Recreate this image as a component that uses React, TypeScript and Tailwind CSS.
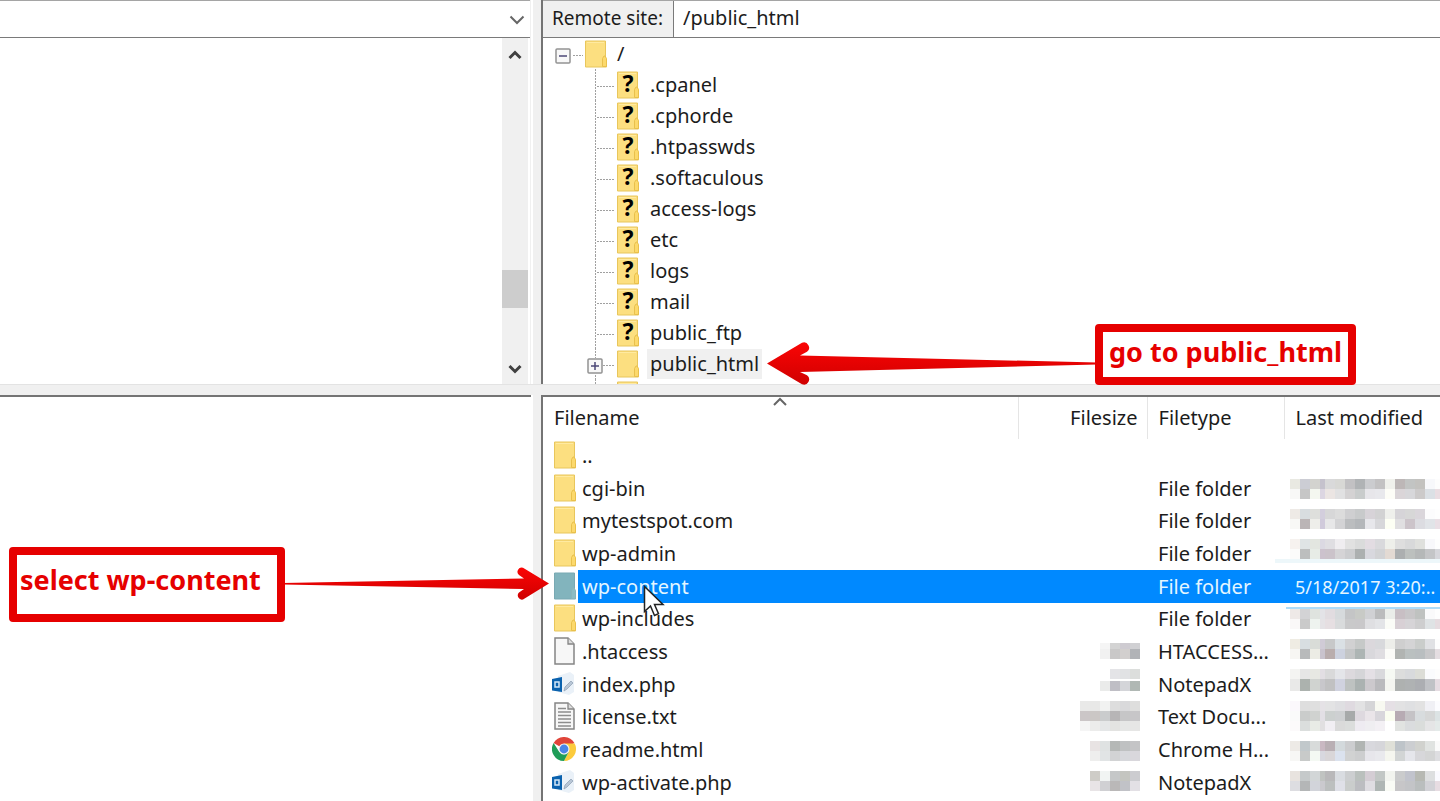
import { ReactNode } from "react";

type IconKind = "folder" | "selected" | "file" | "text" | "php" | "chrome";

const tree = [
  { name: ".cpanel", unknown: true },
  { name: ".cphorde", unknown: true },
  { name: ".htpasswds", unknown: true },
  { name: ".softaculous", unknown: true },
  { name: "access-logs", unknown: true },
  { name: "etc", unknown: true },
  { name: "logs", unknown: true },
  { name: "mail", unknown: true },
  { name: "public_ftp", unknown: true },
  { name: "public_html", unknown: false },
];

const files: { name: string; icon: IconKind; type: string; modified?: string }[] = [
  { name: "..", icon: "folder", type: "" },
  { name: "cgi-bin", icon: "folder", type: "File folder" },
  { name: "mytestspot.com", icon: "folder", type: "File folder" },
  { name: "wp-admin", icon: "folder", type: "File folder" },
  { name: "wp-content", icon: "selected", type: "File folder", modified: "5/18/2017 3:20:.." },
  { name: "wp-includes", icon: "folder", type: "File folder" },
  { name: ".htaccess", icon: "file", type: "HTACCESS..." },
  { name: "index.php", icon: "php", type: "NotepadX" },
  { name: "license.txt", icon: "text", type: "Text Docu..." },
  { name: "readme.html", icon: "chrome", type: "Chrome H..." },
  { name: "wp-activate.php", icon: "php", type: "NotepadX" },
];

// Left edge of every block in the censored date column
const dateX = [210, 220, 230, 240, 245, 255, 265, 275, 285, 295, 305, 315, 325, 335, 345, 355, 360];

const dates: { y: number; h: number; c: string }[] = [
  { y: 9, h: 10, c: "e9e9e2 cccdd4 d3d3cf c5c2cd d9d9da d8d8d5 c2c1c3 b0b3b5 cbcccf c3c2c3 f0f1ec bdb7b7 c2c4c3 c3c2bf f7f8fb fdfdfd" },
  { y: 19, h: 10, c: "f8f8f7 c6c6c6 f4f7f0 dcd6e2 ebe5e3 e1e1e2 d4d2d3 c9cccc e7e6ea e8e8ec fdfdf7 dad5d8 d7d7da cccaca dbe0e5 eadde2" },
  { y: 39, h: 10, c: "eeeae6 d8dde0 dedfdc d3cedd d7d7d8 dcdcdc cfcfd1 c8cacb d7d3d8 d2d2d3 eff0ec d6d4d8 d7d7d7 dad6db fcfcfd fefefe" },
  { y: 49, h: 10, c: "f8f8f6 bbb5b6 eeeeea d0cadb e7e7e8 d3d3d5 bbbdbf b4b7ba e7e7eb d7d7da fdfff4 e0dfe1 ccc4ca dcdce1 e1e4e8 eadfe5" },
  { y: 69, h: 10, c: "f6f2ef dfe4e5 e3e6e0 dbd9e2 dfdee2 efedf0 e1e1e1 dadbdb e2dce2 d9d9dc eeefea dedede d8d9da dfe0dd f8f8fb fefefe" },
  { y: 79, h: 10, c: "fbfbfa bcbebe e7ece6 ccc2cd cbc3ca d5d4d6 cccdcf acb0b0 d8d8de d2d3d5 e3dad3 acafb0 bcc0be b5b8b8 c4c5c7 d6d6db" },
  { y: 139, h: 10, c: "eee9e7 d3d3d5 dfe3df e3e3e7 e1dce0 d6dadc c4c5c6 c8cac6 d0d1d4 bbbcbd eaede9 c8bfc4 c8c6c8 bfc2c0 fafafb fefefe" },
  { y: 149, h: 10, c: "faf8f8 cacaca eef3ef e5e3e6 e6dfe2 d9dbdc c9c9ca c9c8ca dfdfe2 e3e4e7 fbfcf7 d8d0d5 d6d4d7 cececf dfe3e5 e6dce0" },
  { y: 169, h: 10, c: "efece3 d8dee1 d9dcd8 d0cbd6 c7c8c9 dae0e4 d1d1d2 c6c9c8 dbd8dc d8d9dc edeeea cfcfcf d4d4d5 cacdcb e0e1e4 fdfdfd" },
  { y: 179, h: 10, c: "f7f6f3 b8babb ecece5 c9c3cd b9adad cdd2df c4c6c7 adb5b4 d9d8dc dfdde1 fbfbf8 b1b4b2 bac0c0 b9bec0 c7c7c9 e4dde1" },
  { y: 199, h: 10, c: "f4f4f2 e6e6e6 e7e8e3 e2dee3 d9d9da e4e5e9 dcd9dd d5d5d8 e4e0e5 d9d9dc f6f9f3 dcdddc d8dadc dcddd7 fafbfd fdfdfd" },
  { y: 209, h: 12, c: "e9e9e8 acb2ae d0d3d0 c8c7cb c1c1c2 d0d2df bec2c1 abb2b1 ccc9cd bababd f4f5f0 aeb1b0 afb2b3 acaeb2 c0c2c6 e6dce2" },
  { y: 231, h: 10, c: "fbf8fc dedede dfdfdf e5e2e6 e3e3e4 dfdfe2 dfdae0 e2e2e3 d5d5d7 f8f9f1 e5e0e5 e2e2e3 dfe0e2 e2e2e2 f0f0f5 fcfcff" },
  { y: 241, h: 10, c: "fafafa cacccb d0d2d0 e2dfe5 ccd0cf ced0d2 a7aaaa ded9df eae5e9 d8d6db fafdf0 b7abb3 c5c3c6 d8dcde d6d7d7 dce3e4" },
  { y: 251, h: 10, c: "fcfafb dbdedd e8ebe6 e1dfe1 f1eef3 dadada dbdddc eeebf1 efeef1 f3f0f4 ffffff e1e3e1 dadcde dadddb e5e5e6 e4eae9" },
  { y: 271, h: 10, c: "edeae6 c1c8cb d8dbda c9b8c2 b9afb4 d3d9dc cccdcf b1b5b3 d8d8dd d6d6da dfe0d8 bec4c9 ccced1 d1d2ce e0e3e1 fafafa" },
  { y: 281, h: 10, c: "f7f7f5 c8cac9 f4f9f3 d8d8df d9d6d8 dbe2ee d1d2d2 cdcecf e7e6eb e9e9ed f5f6ef d2d5d5 e5e6eb d7d7da d4d5d5 dedee1" },
  { y: 301, h: 10, c: "e8e3df c5c9ca d2d6d7 c0c3c1 b9b8ba d9dce1 ccced0 bac0bd d4cdd4 c2c7c5 f2f4ef cacbcc c1c3cc b7b9b3 dddfe0 fafaff" },
  { y: 311, h: 10, c: "dddde1 b4b6b7 d2d4da cac9ce bcbfbf dfe0e8 cacdcc bcbdc1 dfdde2 afb6b4 f9fbf5 c7c6c8 c3c4c7 babebe d2d2d7 e7dce2" },
];

const sizes: { x: number; y: number; h: number; c: string }[] = [
  { x: 20, y: 173, h: 6, c: "f5f5f5 d3d3d3 cecbd1 d0d0d3" },
  { x: 20, y: 179, h: 10, c: "f1f1f1 c9c8c8 d2cfce b1b3b7" },
  { x: 30, y: 199, h: 10, c: "e4e4e7 e1e2e4 dcdedc" },
  { x: 20, y: 211, h: 10, c: "eaebea bfbec5 d4d5d9 b0b8b4" },
  { x: 0, y: 231, h: 10, c: "e9e9e8 e8e8e7 f1f2f1 dddddd d9d9db dededd" },
  { x: 0, y: 241, h: 10, c: "cbc6c7 cbc7c5 cacccd b7b5b6 c6c6c7 c7c6c8" },
  { x: 0, y: 251, h: 10, c: "f5f5f5 ececeb e5e7e8 e3e3e1 e6e7e6 e6e6e5" },
  { x: 10, y: 271, h: 10, c: "e8e3e3 dfe2e2 b5b8b6 bfc1c2 c4c4c6" },
  { x: 10, y: 281, h: 10, c: "eeeeed e1e4e5 d2d3d4 d7d8dc d9d7dc" },
  { x: 10, y: 301, h: 10, c: "ceccc7 f1f4f3 c5c7c8 c4c5c0 ccccd0" },
  { x: 10, y: 311, h: 10, c: "e8e4e6 d0d0d3 bab8b8 c1c2c7 e3e0e5" },
];

function Censored() {
  return (
    <svg className="pointer-events-none absolute right-0 top-[73px]" width="360" height="331" shapeRendering="crispEdges" aria-hidden="true">
      <rect x="195" y="89" width="165" height="4" fill="#edf7fa" />
      <rect x="206" y="137" width="154" height="2" fill="#aedcf8" />
      {dates.map((row) =>
        row.c.split(" ").map((c, i) => (
          <rect key={`${row.y}-${i}`} x={dateX[i]} y={row.y} width={dateX[i + 1] - dateX[i]} height={row.h} fill={`#${c}`} />
        )),
      )}
      {sizes.map((row) =>
        row.c.split(" ").map((c, i) => (
          <rect key={`${row.y}-${i}`} x={row.x + i * 10} y={row.y} width="10" height={row.h} fill={`#${c}`} />
        )),
      )}
    </svg>
  );
}

function Folder({ selected = false }: { selected?: boolean }) {
  const edge = selected ? "#79a9b3" : "#e8c65c";
  const fill = selected ? "#82b4bd" : "#fcdf80";
  return (
    <svg width="22" height="28" viewBox="0 0 22 28" className="shrink-0" aria-hidden="true">
      <path d="M.5 1h20v17l1 2v7H.5Z" fill={fill} stroke={edge} />
      {!selected && <path d="M2 2.500h17" stroke="#ffeaa0" />}
      <path d="M17.500 26.500v-8l1.500-2.500h1l1.500 2.500v8Z" fill={selected ? "#8dbcc3" : "#fcd96c"} stroke={selected ? "#8ab4ba" : "#e9c04c"} />
    </svg>
  );
}

function Page({ lines = false }: { lines?: boolean }) {
  return (
    <svg width="22" height="28" viewBox="0 0 22 28" className="shrink-0" aria-hidden="true">
      <path d="M1 1h13l6 6v20H1Z" fill="#f7f7f7" stroke="#858585" strokeWidth="1.500" />
      <path d="M14 1v6h6" fill="#ddd" stroke="#858585" strokeWidth="1.300" />
      {lines && <path d="M4 6.500h8M4 10h13M4 13.500h13M4 17h13M4 20.500h13M4 24h13" stroke="#8d8d8d" strokeWidth="1.500" />}
    </svg>
  );
}

function Php() {
  return (
    <svg width="24" height="26" viewBox="0 0 24 26" className="shrink-0" aria-hidden="true">
      <path d="M6 5 18 1l4 3v17l-5 3-11-3Z" fill="#eaf1f8" />
      <path d="M0 8l10-2v15L0 19.500Z" fill="#0b62ae" />
      <path d="M3 11h4v5H3Z" fill="#0b62ae" stroke="#d5e8f8" strokeWidth="1.500" />
      <path d="M12 20l1-4 6-6 2 2-6 6Z" fill="#b8c6d6" stroke="#94a5b8" strokeWidth=".8" />
    </svg>
  );
}

function Chrome() {
  return (
    <svg width="24" height="24" viewBox="0 0 24 24" className="shrink-0" aria-hidden="true">
      <path d="M12 12 1.600 6A12 12 0 0 1 22.400 6Z" fill="#e0453a" />
      <path d="M12 6.500h10.700A12 12 0 0 1 12 24l4.800-9.300Z" fill="#fccb3c" />
      <path d="M1.600 6 7.200 14.700 12 17.500l4.800-2.800L12 24A12 12 0 0 1 1.600 6Z" fill="#1f9d58" />
      <circle cx="12" cy="12" r="5.500" fill="#f4f4f4" />
      <circle cx="12" cy="12" r="4.400" fill="#4a85e8" />
    </svg>
  );
}

function FileIcon({ kind }: { kind: IconKind }) {
  if (kind === "php") return <Php />;
  if (kind === "chrome") return <Chrome />;
  if (kind === "file" || kind === "text") return <Page lines={kind === "text"} />;
  return <Folder selected={kind === "selected"} />;
}

function Chevron({ d, thick = false }: { d: string; thick?: boolean }) {
  return (
    <svg width="16" height="10" viewBox="0 0 16 10" fill="none" stroke={thick ? "#404040" : "#666"} strokeWidth={thick ? 3 : 2} aria-hidden="true">
      <path d={d} />
    </svg>
  );
}

function Toggle({ open }: { open: boolean }) {
  return (
    <button type="button" aria-label={open ? "Collapse" : "Expand"} className="block size-4">
      <svg width="16" height="16" viewBox="0 0 16 16" aria-hidden="true">
        <rect x="1" y="1" width="14" height="14" rx="1" fill="#f8f8f8" stroke="#929292" strokeWidth="1.500" />
        <path d={open ? "M4 8h8" : "M4 8h8M8 4v8"} stroke="#4c4877" strokeWidth="1.500" />
      </svg>
    </button>
  );
}

function Branch({ children }: { children?: ReactNode }) {
  return (
    <div className="relative h-full w-[32px] shrink-0">
      <svg className="absolute inset-0" width="32" height="31" stroke="#777" strokeDasharray="2 1" strokeOpacity=".7" aria-hidden="true">
        <path d="M10.500 0v31M12 17.500h17" />
      </svg>
      {children && <div className="absolute left-[2px] top-[10px] bg-white">{children}</div>}
    </div>
  );
}

function LocalPane() {
  return (
    <div className="flex min-w-0 flex-col border-r border-[#f0f0f0] bg-white">
      <div className="relative h-[38px] shrink-0 border-y border-t-[#a5a5a5] border-b-[#7a7a7a]">
        <select aria-label="Local site" className="h-full w-full appearance-none bg-white px-2 outline-none" />
        <div className="pointer-events-none absolute right-[5px] top-[14px]">
          <Chevron d="M1.500 1.500 8 8l6.500-6.500" />
        </div>
      </div>
      <div className="flex min-h-0 flex-1 justify-end">
        <div className="mr-[2px] flex w-[26px] flex-col items-center bg-[#f0f0f0]">
          <button type="button" aria-label="Scroll up" className="flex h-[34px] w-full items-center justify-center">
            <Chevron thick d="M2.500 8 8 2.500 13.500 8" />
          </button>
          <div className="flex-[197]" />
          <div className="h-[38px] w-full bg-[#cdcdcd]" />
          <div className="flex-[46]" />
          <button type="button" aria-label="Scroll down" className="flex h-[30px] w-full items-center justify-center">
            <Chevron thick d="M2.500 2 8 7.500 13.500 2" />
          </button>
        </div>
      </div>
    </div>
  );
}

function RemoteTree() {
  return (
    <div className="flex min-w-0 flex-col overflow-hidden border-l-2 border-[#747474] bg-white">
      <div className="flex h-[38px] shrink-0 border-y border-t-[#a5a5a5] border-b-[#7a7a7a]">
        <label htmlFor="remote" className="flex w-[131px] shrink-0 items-center border-r border-[#7a7a7a] bg-[#f0f0f0] pb-0.5 pl-[9px] text-[19px]">
          Remote site:
        </label>
        <input id="remote" defaultValue="/public_html" className="min-w-0 flex-1 bg-white px-[9px] pb-0.5 outline-none" />
      </div>
      <div className="flex h-[31px] shrink-0 items-center pl-3">
        <div className="flex items-center pt-1">
          <Toggle open />
          <svg width="14" height="2" stroke="#777" strokeDasharray="2 1" strokeOpacity=".7" aria-hidden="true">
            <path d="M2 .5h10" />
          </svg>
        </div>
        <Folder />
        <span className="pl-[10px]">/</span>
      </div>
      <ul className="pl-[42px]">
        {tree.map((node) => (
          <li key={node.name} className="flex h-[31px] items-center">
            <Branch>{node.unknown ? null : <Toggle open={false} />}</Branch>
            <span className="relative flex shrink-0">
              <Folder />
              {node.unknown && (
                <span className="absolute inset-0 flex items-center justify-center pb-0.5 text-[23px] font-bold leading-none text-black">?</span>
              )}
            </span>
            <button type="button" className={`ml-2 h-[30px] px-[3px] ${node.unknown ? "" : "bg-[#f0f0f0]"}`}>
              {node.name}
            </button>
          </li>
        ))}
        <li className="flex h-[31px] items-center">
          <Branch />
          <Folder />
        </li>
      </ul>
    </div>
  );
}

function FileList() {
  return (
    <div className="relative min-w-0 overflow-hidden border-l-2 border-t-2 border-[#747474] bg-white">
      <table className="w-full table-fixed border-collapse text-left">
        <thead>
          <tr className="h-[42px]">
            <th className="border-r border-[#e5e5e5] p-0 font-normal">
              <div className="relative pl-[11px]">
                Filename
                <div className="absolute left-1/2 top-[-7px] -translate-x-1/2">
                  <Chevron d="M2 8 8 2l6 6" />
                </div>
              </div>
            </th>
            <th className="w-[129px] border-r border-[#e5e5e5] p-0 pr-[9px] text-right font-normal">Filesize</th>
            <th className="w-[137px] border-r border-[#e5e5e5] p-0 pl-[11px] font-normal">Filetype</th>
            <th className="w-[156px] p-0 pl-[11px] font-normal">Last modified</th>
          </tr>
        </thead>
        <tbody>
          {files.map((file) => {
            const selected = file.icon === "selected";
            const wide = file.icon === "php" || file.icon === "chrome";
            return (
              <tr key={file.name} className={`h-[33px] nth-[3n]:h-8 ${selected ? "bg-[#0089ff] text-[#e4f6ff]" : ""}`}>
                <td className="p-0">
                  <div className="flex items-center">
                    <span className={`flex w-[35px] shrink-0 items-center pb-0.5 ${wide ? "pl-[9px]" : "pl-[11px]"} ${selected ? "h-[33px] bg-white" : ""}`}>
                      <FileIcon kind={file.icon} />
                    </span>
                    <span className="pl-1">{file.name}</span>
                  </div>
                </td>
                <td className="p-0" />
                <td className="overflow-hidden whitespace-nowrap p-0 pl-[11px]">{file.type}</td>
                <td className="overflow-hidden whitespace-nowrap p-0 pl-[11px] text-[18px]">{file.modified}</td>
              </tr>
            );
          })}
        </tbody>
      </table>
      <Censored />
      <svg className="absolute left-[100px] top-[188px]" width="24" height="34" viewBox="0 0 24 34" aria-hidden="true">
        <path d="M1.500 1.500v25l6-5.500 4 9.500 4-1.800-4-9.200h8.500Z" fill="#fff" stroke="#222" strokeWidth="1.500" />
      </svg>
    </div>
  );
}

function Arrow({ className, width, left = false }: { className: string; width: number; left?: boolean }) {
  const id = left ? "arrow-left" : "arrow-right";
  const w = width;
  const body = left
    ? `M0 21.500 35 .8A5.200 5.200 0 0 1 40 9.800L33 13.500 ${w} 20.500v2L33 30l7 3.300A5.200 5.200 0 0 1 35 42.300Z`
    : `M${w} 16.500 ${w - 26} .8A4.200 4.200 0 0 0 ${w - 30} 8L${w - 25} 11.500 0 16v1.500L${w - 25} 22l-5 3.500A4.200 4.200 0 0 0 ${w - 26} 32.500Z`;
  return (
    <svg className={`pointer-events-none absolute ${className}`} width={w} height={left ? 43 : 34} aria-hidden="true">
      <defs>
        <linearGradient id={id} x1="0" y1="0" x2="0" y2="1">
          <stop offset="0" stopColor="#fa0505" />
          <stop offset="1" stopColor="#d00000" />
        </linearGradient>
      </defs>
      <path d={body} fill={`url(#${id})`} />
    </svg>
  );
}

export default function App() {
  return (
    <main className="relative grid h-screen grid-cols-[531fr_10px_899fr] grid-rows-[384px_11px_1fr] overflow-hidden bg-[#f0f0f0] font-['Noto_Sans',sans-serif] text-[20px] leading-[28px] text-[#1c1c1c]">
      <LocalPane />
      <div className="border-l-2 border-white" />
      <RemoteTree />
      <div className="col-span-3 border-t border-[#e3e3e3]" />
      <div className="border-t-2 border-[#747474] bg-white" />
      <div className="border-l-2 border-white" />
      <FileList />

      <Arrow left width={330} className="left-[767px] top-[342px]" />
      <p className="absolute left-[1095px] top-[324px] h-[61px] w-[261px] whitespace-nowrap rounded border-8 border-[#e60000] bg-white pl-[6px] text-[27px] font-bold leading-[40px] text-[#e60000]">
        go to public_html
      </p>
      <Arrow width={266} className="left-[283px] top-[567px]" />
      <p className="absolute left-[9px] top-[547px] h-[75px] w-[276px] whitespace-nowrap rounded border-8 border-[#e60000] bg-white pl-[3px] text-[27px] font-bold leading-[50px] text-[#e60000]">
        select wp-content
      </p>
    </main>
  );
}
